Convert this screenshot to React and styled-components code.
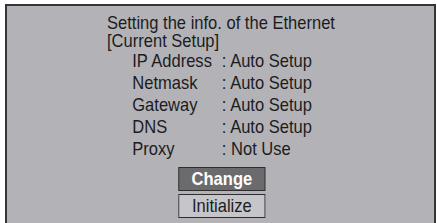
import React from "react"
import styled, { createGlobalStyle } from "styled-components"

const GlobalStyle = createGlobalStyle`
  html, body {
    margin: 0;
    padding: 0;
    background: #ffffff;
  }
  body {
    font-family: "Liberation Sans", Arial, sans-serif;
    color: #1c1c1e;
  }
`

const Screen = styled.div`
  padding: 4px 1px 0 5px;
  height: 223px;
  box-sizing: border-box;
  overflow: hidden;
`

const Panel = styled.div`
  background: #b3b3b7;
  border: 2px solid #353538;
  border-bottom: none;
  height: 240px;
  display: flex;
  justify-content: center;
  padding-top: 8px;
  box-sizing: border-box;
`

// the set's menu font is a condensed grotesk, so squeeze the column
const Content = styled.div`
  display: flex;
  flex-direction: column;
  align-items: center;
  transform: scaleX(0.87);
  transform-origin: center top;
`

const Info = styled.div`
  display: flex;
  flex-direction: column;
  width: 262px;
`

const Title = styled.div`
  font-size: 19px;
  line-height: 18px;
  white-space: nowrap;
`

const Settings = styled.div`
  display: grid;
  grid-template-columns: 103px auto;
  grid-auto-rows: 22px;
  margin-left: 29px;
  font-size: 19px;
  line-height: 22px;
  white-space: nowrap;
`

const Buttons = styled.div`
  display: flex;
  flex-direction: column;
  gap: 3px;
  margin-top: 7px;
  margin-left: 2px;
`

const Button = styled.div`
  width: 100px;
  height: 24px;
  box-sizing: border-box;
  border: 1px solid #2e2e30;
  border-left-width: 1.2px;
  border-right-width: 1.2px;
  display: flex;
  align-items: center;
  justify-content: center;
  font-size: 19px;
  background: ${p => (p.$active ? "#6b6b6e" : "#c6c6ca")};
  color: ${p => (p.$active ? "#ffffff" : "#1c1c1e")};
  font-weight: ${p => (p.$active ? "bold" : "normal")};
`

const rows = [
  ["IP Address", ": Auto Setup"],
  ["Netmask", ": Auto Setup"],
  ["Gateway", ": Auto Setup"],
  ["DNS", ": Auto Setup"],
  ["Proxy", ": Not Use"],
]

export default function App() {
  return (
    <>
      <GlobalStyle />
      <Screen>
        <Panel>
          <Content>
            <Info>
              <Title>Setting the info. of the Ethernet</Title>
              <Title>[Current Setup]</Title>
              <Settings>
                {rows.map(([label, value]) => (
                  <React.Fragment key={label}>
                    <span>{label}</span>
                    <span>{value}</span>
                  </React.Fragment>
                ))}
              </Settings>
            </Info>
            <Buttons>
              <Button $active>Change</Button>
              <Button>Initialize</Button>
            </Buttons>
          </Content>
        </Panel>
      </Screen>
    </>
  )
}
